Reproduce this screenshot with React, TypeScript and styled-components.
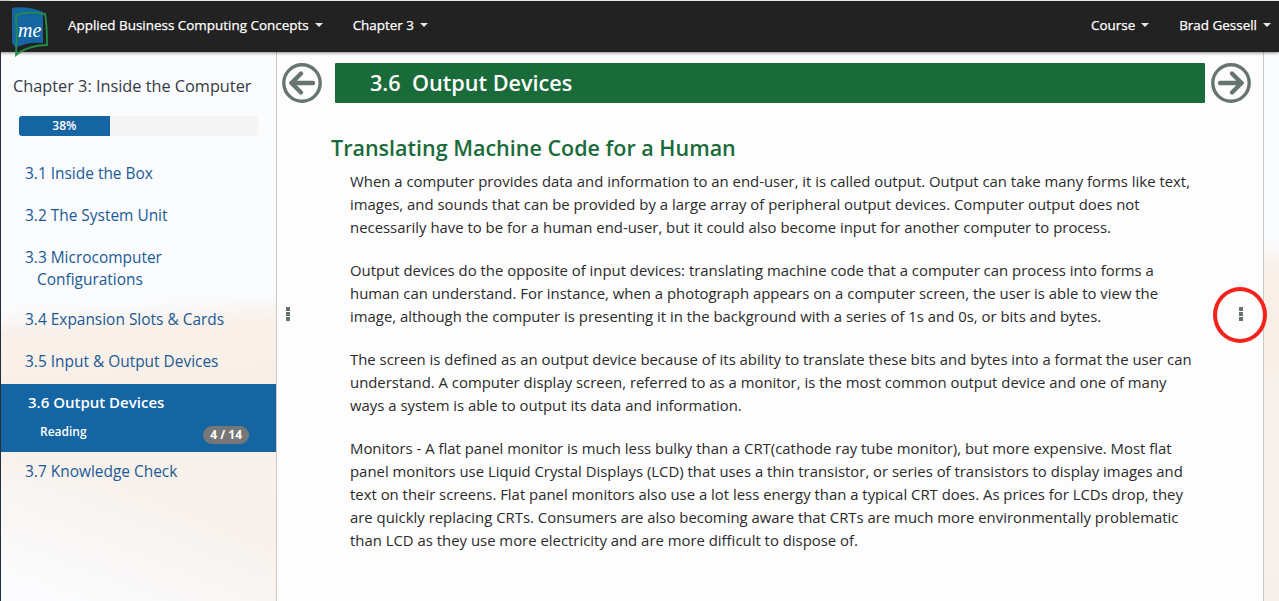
import React, { FC } from 'react';
import styled, { createGlobalStyle } from 'styled-components';

const GlobalStyle = createGlobalStyle`
    html, body {
        margin: 0;
        height: 100%;
        overflow: hidden;
        background: #fbfcfe;
        font-family: "Open Sans", "Noto Sans", sans-serif;
    }
`;

const Page = styled.div`
    position: relative;
    display: flex;
    flex-direction: column;
    width: 1279px;
    height: 601px;
    overflow: hidden;
    background: linear-gradient(177deg, #d8d8d8 0, #d8d8d8 1px, #fbfcfe 1px, #fafbfd 46.5%, #f9f0e9 50%, #f8efe7 62%, #f8f2ed 74%, #f7f0ea 100%);
`;

const Navbar = styled.nav`
    flex: none;
    display: flex;
    align-items: center;
    height: 51px;
    margin-top: 1px;
    padding: 0 8px 3px 0;
    box-sizing: border-box;
    background: #222222;
    box-shadow: 0 1px 3px rgba(0, 0, 0, 0.45);
    color: #ffffff;
    font-size: 13.45px;
    font-weight: 400;
    -webkit-text-stroke: 0.25px #ffffff;
    z-index: 2;
`;

const LogoBox = styled.div`
    width: 68px;
    flex: none;
    height: 48px;
    position: relative;
`;

const LogoSvg = styled.svg`
    position: absolute;
    left: 10px;
    top: 5px;
    -webkit-text-stroke: 0;
`;

const NavItem = styled.div<{ $gap?: number }>`
    display: flex;
    align-items: center;
    margin-right: ${(props) => props.$gap ?? 0}px;
    white-space: nowrap;
`;

const Caret = styled.span`
    display: inline-block;
    margin-left: 6px;
    border-top: 4px solid #e8e8e8;
    border-left: 4px solid transparent;
    border-right: 4px solid transparent;
`;

const Spacer = styled.div`
    flex: 1;
`;

const Body = styled.div`
    flex: 1;
    display: flex;
    min-height: 0;
`;

const Sidebar = styled.aside`
    flex: none;
    width: 275px;
    border-left: 1px solid #24303c;
    border-right: 1px solid #c9c9c9;
    box-sizing: content-box;
    background: linear-gradient(200deg, rgba(251, 252, 254, 0) 75%, rgba(251, 252, 254, 0.95) 96%);
`;

const ChapterTitle = styled.h2`
    margin: 0;
    padding: 23px 0 0 12px;
    height: 27px;
    font-size: 16.3px;
    line-height: 22px;
    font-weight: 400;
    color: #333a44;
`;

const Progress = styled.div`
    margin: 14px 18px 0 18px;
    height: 20px;
    border-radius: 3px;
    background: #f5f5f5;
    overflow: hidden;
`;

const ProgressBar = styled.div`
    height: 100%;
    background: #1565a3;
    color: #ffffff;
    font-size: 12px;
    font-weight: 600;
    line-height: 20px;
    text-align: center;
`;

const Chapters = styled.ul`
    list-style: none;
    margin: 18px 0 0;
    padding: 0;
`;

const Chapter = styled.li`
    padding: 8px 15px 12px 24px;
    font-size: 15.45px;
    line-height: 22px;
    color: #1a5a96;
`;

const Hanging = styled.span`
    display: block;
    padding-left: 12px;
    margin-bottom: -2px;
`;

const ActiveChapter = styled.li`
    height: 68px;
    box-sizing: border-box;
    padding: 7px 27px 0 27px;
    background: #1565a3;
    color: #ffffff;
`;

const ActiveTitle = styled.div`
    font-size: 15px;
    line-height: 22px;
    font-weight: 600;
`;

const ActiveSub = styled.div`
    display: flex;
    align-items: flex-start;
    justify-content: space-between;
    margin-top: 10px;
    padding-left: 12px;
    font-size: 12px;
    line-height: 18px;
    font-weight: 600;
`;

const Badge = styled.span`
    padding: 0 7px;
    height: 18px;
    line-height: 18px;
    margin-top: 3px;
    border-radius: 9px;
    background: #777777;
    font-size: 12px;
    font-weight: 700;
`;

const Main = styled.main`
    position: relative;
    flex: none;
    width: 986px;
    background: #fdfdfd;
    border-right: 1px solid #c9c9c9;
`;

const HeaderRow = styled.div`
    display: flex;
    align-items: center;
    height: 40px;
    margin-top: 11px;
    padding-left: 5px;
`;

const Banner = styled.h1`
    flex: none;
    width: 870px;
    height: 40px;
    margin: 0 6px 0 13px;
    padding: 0 0 1px 35px;
    box-sizing: border-box;
    background: #1a6b3a;
    border-radius: 1px;
    color: #ffffff;
    font-size: 21.65px;
    font-weight: 600;
    line-height: 39px;
    white-space: pre;
`;

const Article = styled.article`
    padding: 30px 0 0 54px;
`;

const Heading = styled.h3`
    margin: 0 0 7px;
    font-size: 21.5px;
    line-height: 30px;
    font-weight: 600;
    color: #1a6b3a;
`;

const Para = styled.p`
    width: 850px;
    margin: 0 0 20px 19px;
    font-size: 14.9px;
    line-height: 23px;
    color: #2b2b2b;
`;

const Handle = styled.div<{ $left: number }>`
    position: absolute;
    left: ${(props) => props.$left}px;
    top: 255px;
    display: flex;
    flex-direction: column;
    gap: 1px;
`;

const Dot = styled.span`
    width: 4px;
    height: 4px;
    background: #667070;
`;

const RedRing = styled.div`
    position: absolute;
    left: 1213px;
    top: 287px;
    width: 54px;
    height: 56px;
    box-sizing: border-box;
    border: 4.5px solid #f5221b;
    border-radius: 50%;
`;

const ArrowCircle: FC<{ flip?: boolean }> = ({ flip }) => (
    <svg width="40" height="40" viewBox="0 0 40 40" fill="none" stroke="#667571" style={{ flex: 'none' }}>
        <circle cx="20" cy="20" r="18.2" strokeWidth="3.4" />
        <g transform={flip ? 'rotate(180 20 20)' : undefined} strokeWidth="4.4" strokeLinecap="round" strokeLinejoin="round">
            <path d="M31 20H9.5" />
            <path d="M19 10.5L9.5 20L19 29.5" />
        </g>
    </svg>
);

const Logo: FC = () => (
    <LogoSvg width="40" height="52" viewBox="0 0 40 52">
        <path d="M2 2C12 0 24 2 33 6V37C22 36 12 38 6 42L2 37Z" fill="#1565a3" />
        <path d="M6 9C14 6 26 6 35 8C37 18 37 30 37 39C27 39 14 42 6 49C7 35 7 22 6 9Z" fill="none" stroke="#219045" strokeWidth="1.8" />
        <text x="8" y="31" fill="#ffffff" fontFamily='"Liberation Serif", serif' fontStyle="italic" fontWeight="400" fontSize="20">
            me
        </text>
    </LogoSvg>
);

const Handles: FC<{ left: number }> = ({ left }) => (
    <Handle $left={left}>
        <Dot />
        <Dot />
        <Dot />
    </Handle>
);

const App: FC = () => (
    <Page>
        <GlobalStyle />
        <Navbar>
            <LogoBox>
                <Logo />
            </LogoBox>
            <NavItem $gap={30}>
                Applied Business Computing Concepts
                <Caret />
            </NavItem>
            <NavItem>
                Chapter 3
                <Caret />
            </NavItem>
            <Spacer />
            <NavItem $gap={30}>
                Course
                <Caret />
            </NavItem>
            <NavItem>
                Brad Gessell
                <Caret />
            </NavItem>
        </Navbar>
        <Body>
            <Sidebar>
                <ChapterTitle>Chapter 3: Inside the Computer</ChapterTitle>
                <Progress>
                    <ProgressBar style={{ width: '38%' }}>38%</ProgressBar>
                </Progress>
                <Chapters>
                    <Chapter>3.1 Inside the Box</Chapter>
                    <Chapter>3.2 The System Unit</Chapter>
                    <Chapter>
                        3.3 Microcomputer
                        <Hanging>Configurations</Hanging>
                    </Chapter>
                    <Chapter>3.4 Expansion Slots &amp; Cards</Chapter>
                    <Chapter>3.5 Input &amp; Output Devices</Chapter>
                    <ActiveChapter>
                        <ActiveTitle>3.6 Output Devices</ActiveTitle>
                        <ActiveSub>
                            Reading
                            <Badge>4 / 14</Badge>
                        </ActiveSub>
                    </ActiveChapter>
                    <Chapter>3.7 Knowledge Check</Chapter>
                </Chapters>
            </Sidebar>
            <Main>
                <Handles left={9} />
                <Handles left={962} />
                <HeaderRow>
                    <ArrowCircle />
                    <Banner>3.6  Output Devices</Banner>
                    <ArrowCircle flip />
                </HeaderRow>
                <Article>
                    <Heading>Translating Machine Code for a Human</Heading>
                    <Para>
                        When a computer provides data and information to an end-user, it is called output. Output can take many forms like text, images, and sounds that can be provided by a large array of peripheral output devices. Computer output does not necessarily have to be for a human end-user, but it could also become input for another computer to process.
                    </Para>
                    <Para>
                        Output devices do the opposite of input devices: translating machine code that a computer can process into forms a human can understand. For instance, when a photograph appears on a computer screen, the user is able to view the image, although the computer is presenting it in the background with a series of 1s and 0s, or bits and bytes.
                    </Para>
                    <Para>
                        The screen is defined as an output device because of its ability to translate these bits and bytes into a format the user can understand. A computer display screen, referred to as a monitor, is the most common output device and one of many ways a system is able to output its data and information.
                    </Para>
                    <Para>
                        Monitors - A flat panel monitor is much less bulky than a CRT(cathode ray tube monitor), but more expensive. Most flat panel monitors use Liquid Crystal Displays (LCD) that uses a thin transistor, or series of transistors to display images and text on their screens. Flat panel monitors also use a lot less energy than a typical CRT does. As prices for LCDs drop, they are quickly replacing CRTs. Consumers are also becoming aware that CRTs are much more environmentally problematic than LCD as they use more electricity and are more difficult to dispose of.
                    </Para>
                </Article>
            </Main>
        </Body>
        <RedRing />
    </Page>
);

export default App;
